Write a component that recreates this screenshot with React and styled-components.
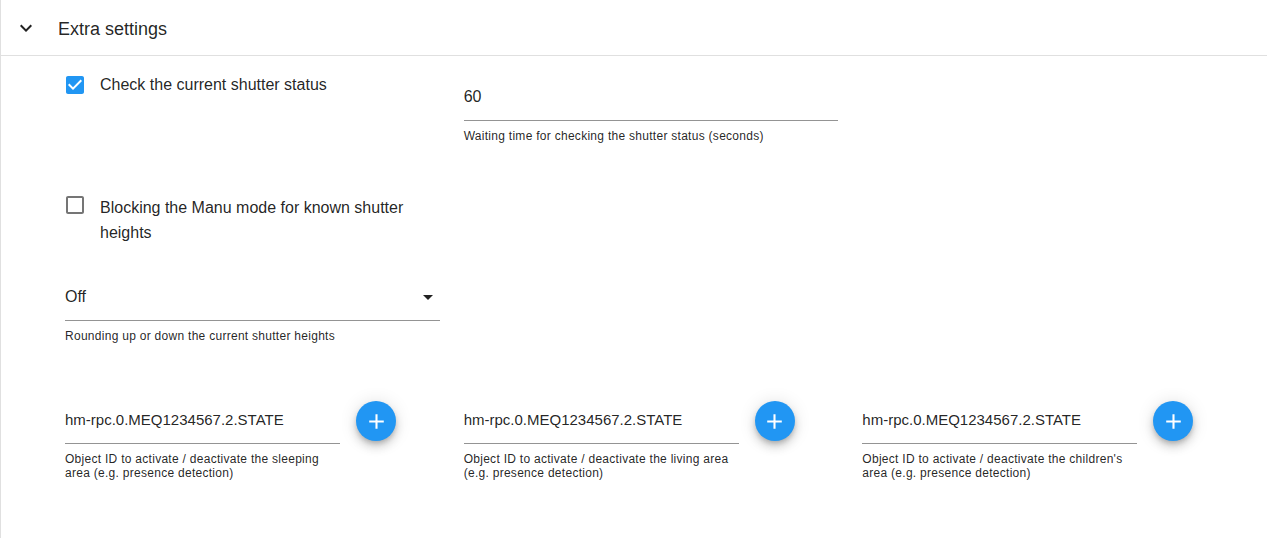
import React from 'react'
import styled, { createGlobalStyle } from 'styled-components'

const Global = createGlobalStyle`
body {
  margin: 0;
  font-family: "Liberation Sans", Arial, Helvetica, sans-serif;
  color: rgba(0, 0, 0, 0.87);
  background: #fff;
}
`

const Panel = styled.div`
min-height: 538px;
box-sizing: border-box;
border-left: 1px solid #e0e0e0;
`

const Header = styled.div`
height: 55px;
border-bottom: 1px solid #e0e0e0;
display: flex;
align-items: center;
padding-left: 13px;
gap: 20px;
font-size: 18px;
`

const Title = styled.div`
margin-top: 3px;
`

const Body = styled.div`
padding-left: 64px;
display: flex;
flex-direction: column;
`

const Row = styled.div`
display: grid;
grid-template-columns: repeat(3, 374.67px);
column-gap: 24px;
align-items: start;
margin-top: ${p => p.$top}px;
`

const CheckLabel = styled.label`
display: flex;
align-items: flex-start;
margin-top: ${p => p.$top || 0}px;
font-size: 16px;
line-height: ${p => p.$lh || 24}px;
cursor: pointer;
svg {
  flex: none;
  margin-left: -2px;
  margin-top: ${p => p.$iconTop || 0}px;
}
span {
  margin-left: 13px;
}
`

const Field = styled.div`
display: flex;
flex-direction: column;
width: ${p => p.$width || '100%'};
margin-top: ${p => p.$top || 0}px;
`

const Input = styled.div`
position: relative;
font-size: ${p => p.$size || 16}px;
line-height: 24px;
padding-bottom: 11px;
border-bottom: 1px solid rgba(0, 0, 0, 0.42);
svg {
  position: absolute;
  right: 0;
  top: 0;
}
`

const Helper = styled.div`
margin-top: 8px;
font-size: 12px;
line-height: 14px;
letter-spacing: 0.28px;
`

const IdCell = styled.div`
display: flex;
align-items: flex-start;
gap: 16px;
`

const Fab = styled.button`
flex: none;
width: 40px;
height: 40px;
border: none;
border-radius: 50%;
padding: 0;
background: #2196f3;
display: flex;
align-items: center;
justify-content: center;
box-shadow: 0px 3px 5px -1px rgba(0,0,0,0.2), 0px 6px 10px 0px rgba(0,0,0,0.14), 0px 1px 18px 0px rgba(0,0,0,0.12);
cursor: pointer;
`

const ExpandMore = () => (
  <svg width="24" height="24" viewBox="0 0 24 24" fill="rgba(0,0,0,0.87)">
    <path d="M16.59 8.59 12 13.17 7.41 8.59 6 10l6 6 6-6z" />
  </svg>
)

const Box = ({ checked }) => (
  <svg width="24" height="24" viewBox="0 0 24 24" fill={checked ? '#2196f3' : 'rgba(0,0,0,0.54)'}>
    {checked
      ? <path d="M19 3H5c-1.11 0-2 .9-2 2v14c0 1.1.89 2 2 2h14c1.11 0 2-.9 2-2V5c0-1.1-.89-2-2-2zm-9 14l-5-5 1.41-1.41L10 14.17l7.59-7.59L19 8l-9 9z" />
      : <path d="M19 5v14H5V5h14m0-2H5c-1.1 0-2 .9-2 2v14c0 1.1.9 2 2 2h14c1.1 0 2-.9 2-2V5c0-1.1-.9-2-2-2z" />}
  </svg>
)

const DropArrow = () => (
  <svg width="24" height="24" viewBox="0 0 24 24" fill="rgba(0,0,0,0.87)">
    <path d="M7 10l5 5 5-5z" />
  </svg>
)

const Plus = () => (
  <svg width="25" height="25" viewBox="0 0 24 24" fill="#fff">
    <path d="M19 13h-6v6h-2v-6H5v-2h6V5h2v6h6v2z" />
  </svg>
)

const ids = [
  'Object ID to activate / deactivate the sleeping area (e.g. presence detection)',
  'Object ID to activate / deactivate the living area (e.g. presence detection)',
  "Object ID to activate / deactivate the children's area (e.g. presence detection)",
]

const App = () => {
  return (
    <Panel>
      <Global />
      <Header>
        <ExpandMore />
        <Title>Extra settings</Title>
      </Header>
      <Body>
        <Row $top={0}>
          <CheckLabel $top={17}>
            <Box checked />
            <span>Check the current shutter status</span>
          </CheckLabel>
          <Field $top={29}>
            <Input>60</Input>
            <Helper>Waiting time for checking the shutter status (seconds)</Helper>
          </Field>
        </Row>
        <Row $top={52}>
          <CheckLabel $iconTop={-2} $lh={25}>
            <Box />
            <span>Blocking the Manu mode for known shutter heights</span>
          </CheckLabel>
        </Row>
        <Row $top={40}>
          <Field>
            <Input>
              Off
              <DropArrow />
            </Input>
            <Helper>Rounding up or down the current shutter heights</Helper>
          </Field>
        </Row>
        <Row $top={58}>
          {ids.map(text => (
            <IdCell key={text}>
              <Field $width="275px" $top={7}>
                <Input $size={15}>hm-rpc.0.MEQ1234567.2.STATE</Input>
                <Helper>{text}</Helper>
              </Field>
              <Fab>
                <Plus />
              </Fab>
            </IdCell>
          ))}
        </Row>
      </Body>
    </Panel>
  )
}

export default App
